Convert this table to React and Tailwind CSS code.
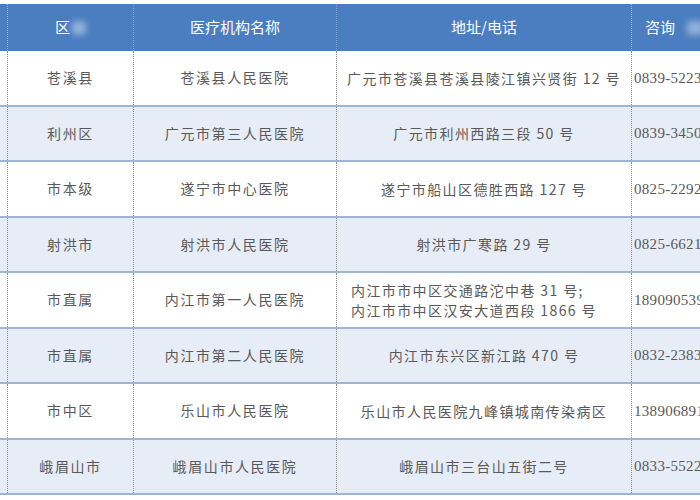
import React from "react";

const rows = [
  ["苍溪县", "苍溪县人民医院", ["广元市苍溪县苍溪县陵江镇兴贤街 12 号"], "0839-52236"],
  ["利州区", "广元市第三人民医院", ["广元市利州西路三段 50 号"], "0839-34502"],
  ["市本级", "遂宁市中心医院", ["遂宁市船山区德胜西路 127 号"], "0825-22926"],
  ["射洪市", "射洪市人民医院", ["射洪市广寒路 29 号"], "0825-66211"],
  ["市直属", "内江市第一人民医院", ["内江市市中区交通路沱中巷 31 号;", "内江市市中区汉安大道西段 1866 号"], "18909053900"],
  ["市直属", "内江市第二人民医院", ["内江市东兴区新江路 470 号"], "0832-23836"],
  ["市中区", "乐山市人民医院", ["乐山市人民医院九峰镇城南传染病区"], "13890689100"],
  ["峨眉山市", "峨眉山市人民医院", ["峨眉山市三台山五街二号"], "0833-55221"],
];

const cjk = { fontFamily: '"Noto Sans CJK SC", "Noto Sans", sans-serif' };
const num = { fontFamily: '"Liberation Serif", "Noto Sans CJK SC", serif' };

export default function App() {
  return (
    <div className="w-[700px] h-[500px] overflow-hidden bg-white relative" style={cjk}>
      <div className="w-[760px] pt-[4px]">
        {/* header */}
        <div className="grid grid-cols-[7px_126px_203px_295px_129px] h-[47px] bg-[#4b7ec0] text-white text-[15px]">
          <div />
          <div className="border-l border-dotted border-[#9bb6da] flex items-center justify-center">
            <span>区</span>
            <span className="w-[14px] h-[14px] ml-[2px] bg-white/40 blur-[3px] rounded" />
          </div>
          <div className="border-l border-dotted border-[#8aa8d2] flex items-center justify-center">医疗机构名称</div>
          <div className="border-l border-dotted border-[#8aa8d2] flex items-center justify-center">地址/电话</div>
          <div className="border-l border-dotted border-[#9bb6da] flex items-center pl-[13px]">
            <span>咨询</span>
            <span className="w-[16px] h-[14px] ml-[12px] bg-white/40 blur-[3px] rounded" />
          </div>
        </div>
        {/* body */}
        {rows.map((r, i) => (
          <div
            key={i}
            className={
              "grid grid-cols-[7px_126px_203px_295px_129px] h-[55.5px] border-b-2 border-[#9fb5d3] text-[14px] text-[#595959] " +
              (i % 2 === 0 ? "bg-white" : "bg-[#e7edf6]")
            }
          >
            <div />
            <div className="border-l border-dotted border-[#8c8c8c] flex items-center justify-center tracking-[1.6px]">
              {r[0]}
            </div>
            <div className="border-l border-dotted border-[#8c8c8c] flex items-center justify-center tracking-[1.6px]">
              {r[1]}
            </div>
            <div className="border-l border-dotted border-[#8c8c8c] flex flex-col items-center justify-center tracking-[1.4px] leading-[20px]">
              {r[2].map((l, j) => (
                <div key={j} className={r[2].length > 1 ? "self-start pl-[14px]" : ""}>
                  {l}
                </div>
              ))}
            </div>
            <div className="border-l border-dotted border-[#8c8c8c] flex items-center pl-[2px] text-[15px] tracking-[0.3px]" style={num}>
              {r[3]}
            </div>
          </div>
        ))}
      </div>
    </div>
  );
}
